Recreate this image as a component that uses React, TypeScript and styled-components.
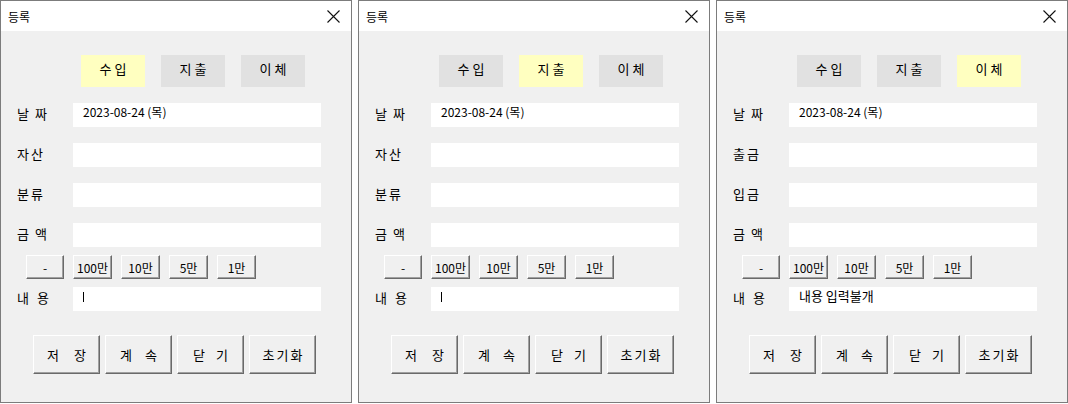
import { Fragment } from 'react';
import styled, { createGlobalStyle } from 'styled-components';

const GlobalStyle = createGlobalStyle`
	html, body {
		margin: 0;
		padding: 0;
		background: #ffffff;
	}
	body {
		font-family: "Noto Sans CJK KR", "Noto Sans", sans-serif;
		color: #000;
	}
`;

const Desktop = styled.div`
	display: flex;
	gap: 6px;
	width: 1068px;
	height: 404px;
	background: #ffffff;
`;

const Window = styled.section`
	display: flex;
	flex-direction: column;
	width: 352px;
	height: 403px;
	box-sizing: border-box;
	border: 1px solid #7c7c7c;
	background: #f0f0f0;
`;

const TitleBar = styled.header`
	display: flex;
	align-items: center;
	justify-content: space-between;
	height: 30px;
	padding: 0 11px 0 7px;
	background: #ffffff;
	font-size: 12px;
`;

const Body = styled.div`
	display: flex;
	flex-direction: column;
	padding: 24px 0 0 16px;
`;

const TypeRow = styled.div`
	display: flex;
	gap: 16px;
	margin-left: 64px;
`;

const TypeButton = styled.button<{ $active?: boolean }>`
	display: flex;
	gap: 3px;
	align-items: center;
	justify-content: center;
	width: 64px;
	height: 32px;
	padding: 0 0 5px;
	border: 0;
	background: ${(p) => (p.$active ? '#ffffc0' : '#e1e1e1')};
	font: inherit;
	font-size: 13px;
	color: #000;
`;

const Form = styled.div`
	display: grid;
	grid-template-columns: 56px 248px;
	row-gap: 16px;
	margin-top: 16px;
`;

const Label = styled.div<{ $gap: number }>`
	display: flex;
	gap: ${(p) => p.$gap}px;
	height: 24px;
	padding-bottom: 3px;
	box-sizing: border-box;
	align-items: center;
	font-size: 13px;
`;

const Field = styled.div`
	display: flex;
	align-items: flex-start;
	height: 24px;
	padding: 1px 10px 0;
	box-sizing: border-box;
	background: #ffffff;
	font-size: 12px;
	line-height: 16px;
	white-space: pre;
`;

const NoteText = styled.span`
	font-size: 13px;
`;

const Caret = styled.span`
	width: 1px;
	height: 10px;
	margin-top: 4px;
	background: #000;
`;

const AmountRow = styled.div`
	display: flex;
	gap: 9px;
	margin: 8px 0 0 9px;
`;

const RaisedButton = styled.button`
	display: flex;
	align-items: center;
	justify-content: center;
	box-sizing: border-box;
	padding: 0;
	border: 1px solid;
	border-color: #ffffff #6a6a6a #6a6a6a #ffffff;
	box-shadow: inset -1px -1px 0 #a0a0a0;
	background: #f0f0f0;
	font: inherit;
	color: #000;
`;

const AmountButton = styled(RaisedButton)<{ $width: number }>`
	width: ${(p) => p.$width}px;
	height: 24px;
	font-size: 12px;
`;

const NoteRow = styled.div`
	display: grid;
	grid-template-columns: 56px 248px;
	margin-top: 8px;
`;

const ActionRow = styled.div`
	display: flex;
	gap: 5px;
	margin: 24px 0 0 16px;
`;

const ActionButton = styled(RaisedButton)<{ $gap: number }>`
	gap: ${(p) => p.$gap}px;
	width: 67px;
	height: 39px;
	font-size: 13px;
`;

function Spaced({ text }: { text: string }) {
	return (
		<>
			{text.split('').map((ch, i) => (
				<span key={i}>{ch}</span>
			))}
		</>
	);
}

function CloseIcon() {
	return (
		<svg width="13" height="13" viewBox="0 0 13 13">
			<path d="M0.5 0.5 L12.5 12.5 M12.5 0.5 L0.5 12.5" stroke="#111" strokeWidth="1.1" fill="none" />
		</svg>
	);
}

type Mode = 'income' | 'expense' | 'transfer';

const types: { key: Mode; label: string }[] = [
	{ key: 'income', label: '수입' },
	{ key: 'expense', label: '지출' },
	{ key: 'transfer', label: '이체' },
];

const amounts = [
	{ label: '-', width: 38 },
	{ label: '100만', width: 39 },
	{ label: '10만', width: 39 },
	{ label: '5만', width: 39 },
	{ label: '1만', width: 39 },
];

const actions = [
	{ label: '저장', gap: 15 },
	{ label: '계속', gap: 13 },
	{ label: '닫기', gap: 11 },
	{ label: '초기화', gap: 2 },
];

function EntryWindow({ mode }: { mode: Mode }) {
	const transfer = mode === 'transfer';
	const rows = [
		{ label: '날짜', gap: 6, value: '2023-08-24 (목)' },
		{ label: transfer ? '출금' : '자산', gap: 2 },
		{ label: transfer ? '입금' : '분류', gap: 2 },
		{ label: '금액', gap: 6 },
	];

	return (
		<Window>
			<TitleBar>
				<span>등록</span>
				<CloseIcon />
			</TitleBar>
			<Body>
				<TypeRow>
					{types.map((t) => (
						<TypeButton key={t.key} type="button" $active={t.key === mode}>
							<Spaced text={t.label} />
						</TypeButton>
					))}
				</TypeRow>
				<Form>
					{rows.map((row) => (
						<Fragment key={row.label}>
							<Label $gap={row.gap}>
								<Spaced text={row.label} />
							</Label>
							<Field>{row.value}</Field>
						</Fragment>
					))}
				</Form>
				<AmountRow>
					{amounts.map((a) => (
						<AmountButton key={a.label} type="button" $width={a.width}>
							{a.label}
						</AmountButton>
					))}
				</AmountRow>
				<NoteRow>
					<Label $gap={8}>
						<Spaced text="내용" />
					</Label>
					<Field>{transfer ? <NoteText>내용 입력불개</NoteText> : <Caret />}</Field>
				</NoteRow>
				<ActionRow>
					{actions.map((a) => (
						<ActionButton key={a.label} type="button" $gap={a.gap}>
							<Spaced text={a.label} />
						</ActionButton>
					))}
				</ActionRow>
			</Body>
		</Window>
	);
}

export default function App() {
	return (
		<>
			<GlobalStyle />
			<Desktop>
				<EntryWindow mode="income" />
				<EntryWindow mode="expense" />
				<EntryWindow mode="transfer" />
			</Desktop>
		</>
	);
}
